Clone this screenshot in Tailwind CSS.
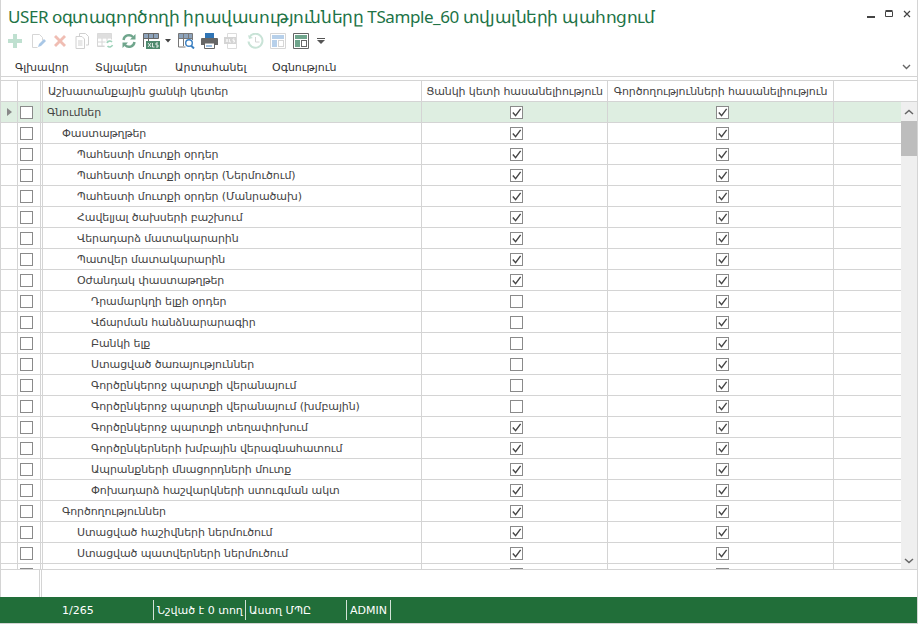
<!DOCTYPE html>
<html lang="hy">

<head>
  <meta charset="UTF-8" />
  <title>USER իրավասություններ</title>
  <script src="https://cdn.jsdelivr.net/npm/@tailwindcss/browser@4"></script>
</head>

<body class="bg-white overflow-hidden font-['DejaVu_Sans',sans-serif] text-[#444]">
  <div class="w-[918px] h-[624px] flex flex-col border-l border-r border-[#d4d4d4]">

    <!-- title -->
    <div class="h-[30px] shrink-0 flex items-center pl-[7px] pt-[2px] relative">
      <span class="text-[17px] leading-none tracking-[-0.42px] text-[#217346] font-['Noto_Sans',sans-serif] whitespace-nowrap">USER օգտագործողի իրավասությունները TSample_60 տվյալների պահոցում</span>
      <div class="absolute left-[865px] top-[9px] flex items-center gap-[9px]">
        <svg width="10" height="10" viewBox="0 0 10 10"><rect x="1" y="7" width="8" height="2" fill="#444" /></svg>
        <svg width="9" height="10" viewBox="0 0 9 10"><path d="M.5 2.500h7v5h-7z M.5 1.500h7" fill="none" stroke="#444" /></svg>
        <svg width="9" height="10" viewBox="0 0 9 10"><path d="M1 2l6 6M7 2l-6 6" stroke="#444" stroke-width="1.200" /></svg>
      </div>
    </div>

    <!-- toolbar -->
    <div class="h-[22px] shrink-0 flex items-center pl-[6px] relative">
      <div class="w-[23px] flex"><svg width="16" height="16" viewBox="0 0 16 16"><path d="M6 1h4v5h5v4h-5v5H6v-5H1V6h5z" fill="#bfe0d0" /></svg></div>
      <div class="w-[22px] flex"><svg width="16" height="16" viewBox="0 0 16 16"><path d="M2.500 1.500h7l3 3v3M2.500 1.500v13h5" fill="none" stroke="#d6d6d6" /><path d="M8 14l1-3 5-5 2 2-5 5z" fill="#a9c7e6" /></svg></div>
      <div class="w-[22px] flex"><svg width="16" height="16" viewBox="0 0 16 16"><path d="M2 4l2-2 4 4 4-4 2 2-4 4 4 4-2 2-4-4-4 4-2-2 4-4z" fill="#f0bdb3" /></svg></div>
      <div class="w-[23px] flex"><svg width="16" height="16" viewBox="0 0 16 16"><path d="M5.500 3V.5h6l3 3v8.500H12M2 3.500h6l2.500 2.500v9.500H2z" fill="#fff" stroke="#d0d0d0" /><path d="M4 8h4.500M4 10h4.500M4 12h4.500" stroke="#d0d0d0" /></svg></div>
      <div class="w-[24px] flex"><svg width="17" height="16" viewBox="0 0 17 16"><path d="M.5.500h14v6M.5.500v13h7M.5 5h14M.5 9h8M.5 13h7M5 .5v13M10 .5v8" fill="none" stroke="#d6d6d6" /><path d="M.5.500h14V5H.5z" fill="#dedede" /><path d="M10 10a3 3 0 0 1 5-1M15.500 12a3 3 0 0 1-5 1" fill="none" stroke="#9fd3bb" stroke-width="1.600" /></svg></div>
      <div class="w-[22px] flex"><svg width="16" height="16" viewBox="0 0 16 16"><path d="M2.500 7a5.500 5.500 0 0 1 9.500-3M13.500 9a5.500 5.500 0 0 1-9.500 3" fill="none" stroke="#6fa58c" stroke-width="2.400" /><path d="M14.500 1v5.500H9zM1.500 15V9.500H7z" fill="#6fa58c" /></svg></div>
      <div class="w-[22px] flex"><svg width="17" height="16" viewBox="0 0 17 16"><path d="M.5 .5h15v5H.5z" fill="#8da3bb" stroke="#666" /><path d="M5.500 .5v5M10.500 .5v5M.5 5v9M5.500 5v4" fill="none" stroke="#666" /><rect x="3" y="8" width="14" height="8" fill="#4e8a6e" /><path d="M5 10l3 4M8 10l-3 4M9.500 10v4h2M15 10h-2v2h2v2h-2" fill="none" stroke="#fff" stroke-width=".8" /></svg></div>
      <div class="w-[13px] flex"><svg width="6" height="4" viewBox="0 0 6 4"><path d="M0 0h6L3 3.500z" fill="#444" /></svg></div>
      <div class="w-[23px] flex"><svg width="17" height="16" viewBox="0 0 17 16"><path d="M.5.500h14v5H.5z" fill="#8da3bb" stroke="#777" /><path d="M.5 5v9h7M5.500 1v12M10.500 1v4M14.500 5v2" fill="none" stroke="#777" /><circle cx="11" cy="10" r="3.300" fill="#fff" stroke="#3a7fc1" stroke-width="1.400" /><path d="M13 12.500l3 3" stroke="#3a7fc1" stroke-width="2" /></svg></div>
      <div class="w-[23px] flex"><svg width="17" height="16" viewBox="0 0 17 16"><rect x="4" y="0" width="9" height="5" fill="#2f74b5" /><path d="M1 5h15a1 1 0 0 1 1 1v6h-3v-2H3v2H0V6a1 1 0 0 1 1-1z" fill="#666" /><path d="M3.500 10h10v5.500h-10z" fill="#fff" stroke="#666" /><path d="M5 13h6" stroke="#3a7fc1" /></svg></div>
      <div class="w-[23px] flex"><svg width="16" height="16" viewBox="0 0 16 16"><path d="M3.500.5h9v15h-9z" fill="#fff" stroke="#dcdcdc" /><rect x="0" y="4" width="12" height="7" fill="#d4d4d4" /><path d="M2 6l2 3M4 6l-2 3M5.500 6v3h1.500M10.500 6H9v1.500h1.500V9H9" fill="none" stroke="#fff" stroke-width=".8" /></svg></div>
      <div class="w-[23px] flex"><svg width="17" height="17" viewBox="0 0 17 17"><path d="M2.500 4a7 7 0 1 1-1 4.500" fill="none" stroke="#c9e3d7" stroke-width="2" /><path d="M1 2l1 4 4-1z" fill="#c9e3d7" /><path d="M8.500 4v5h4" fill="none" stroke="#d4d4d4" /></svg></div>
      <div class="w-[23px] flex"><svg width="16" height="16" viewBox="0 0 16 16"><path d="M.5 .5h15v15H.5z" fill="#fff" stroke="#d6d6d6" /><rect x="2" y="2" width="12" height="4" fill="#b7d0ea" /><rect x="2" y="7" width="5" height="7" fill="#b7d0ea" /><rect x="8.500" y="7.500" width="5" height="6" fill="#fff" stroke="#d6d6d6" /></svg></div>
      <div class="w-[24px] flex"><svg width="16" height="16" viewBox="0 0 16 16"><path d="M.5 .5h15v15H.5z" fill="#fff" stroke="#666" /><rect x="2" y="2" width="12" height="4" fill="#6fa58c" /><rect x="2" y="7" width="5" height="7" fill="#6fa58c" /><rect x="8.500" y="7.500" width="5" height="6" fill="#fff" stroke="#666" /></svg></div>
      <div class="flex"><svg width="8" height="6" viewBox="0 0 8 6"><path d="M0 0h8v1H0zM0 2h8L4 6z" fill="#555" /></svg></div>
    </div>

    <!-- menu -->
    <div class="h-[25px] shrink-0 flex items-center pt-[9px] pl-[14px] text-[11px] text-[#333] relative border-b border-[#d4d4d4]">
      <span class="w-[80px]">Գլխավոր</span>
      <span class="w-[80px]">Տվյալներ</span>
      <span class="w-[97px]">Արտահանել</span>
      <span>Օգնություն</span>
      <svg class="absolute left-[901px] top-[12px]" width="9" height="6" viewBox="0 0 9 6"><path d="M1 1l3.500 3.500L8 1" fill="none" stroke="#666" stroke-width="1.400" /></svg>
    </div>

    <!-- header -->
    <div class="mt-[3px] h-[22px] shrink-0 flex text-[11px] tracking-[-0.1px] text-[#444] border-t border-b border-[#d4d4d4]">
      <div class="w-[17px] border-r border-[#d4d4d4]"></div>
      <div class="w-[23px] border-r border-[#d4d4d4]"></div>
      <div class="w-[380px] pl-[5px] pt-[2px] border-r border-l border-[#d4d4d4] flex items-center ml-[1px]">Աշխատանքային ցանկի կետեր</div>
      <div class="w-[186px] pt-[2px] border-r border-[#d4d4d4] flex items-center justify-center whitespace-nowrap">Ցանկի կետի հասանելիություն</div>
      <div class="w-[226px] pt-[2px] border-r border-[#d4d4d4] flex items-center justify-center whitespace-nowrap">Գործողությունների հասանելիություն</div>
    </div>

    <!-- grid body -->
    <div class="h-[468px] shrink-0 relative overflow-hidden border-b border-[#d4d4d4]">
      <div id="rows"></div>
      <div class="absolute left-[900px] top-0 bottom-0 w-[16px] bg-[#efefef]">
        <svg class="absolute left-[3px] top-[7px]" width="10" height="6" viewBox="0 0 10 6"><path d="M1 5l4-3.500L9 5" fill="none" stroke="#666" stroke-width="1.500" /></svg>
        <div class="absolute top-[19px] h-[35px] w-full bg-[#bdbdbd]"></div>
        <svg class="absolute left-[3px] top-[456px]" width="10" height="6" viewBox="0 0 10 6"><path d="M1 1l4 3.500L9 1" fill="none" stroke="#666" stroke-width="1.500" /></svg>
      </div>
    </div>

    <!-- empty footer strip -->
    <div class="h-[27px] shrink-0 flex">
      <div class="w-[39px] border-r border-[#d4d4d4]"></div>
      <div class="w-[2px] border-r border-[#d4d4d4]"></div>
    </div>

    <!-- status bar -->
    <div class="h-[26px] shrink-0 bg-[#216e39] flex items-center text-white text-[11px] -ml-px">
      <span class="w-[153px] pl-[62px] pt-[2px]">1/265</span>
      <span class="w-[92px] h-[20px] pl-[3px] pt-[2px] border-l border-white/80 flex items-center whitespace-nowrap">Նշված է 0 տող</span>
      <span class="w-[101px] h-[20px] pl-[3px] pt-[2px] border-l border-white/80 flex items-center whitespace-nowrap">Աստղ ՄՊԸ</span>
      <span class="w-[45px] h-[20px] pl-[3px] pt-[2px] border-l border-r border-white/80 flex items-center">ADMIN</span>
    </div>
    <div class="h-px shrink-0 bg-[#d4d4d4] -ml-px"></div>
  </div>

  <script>
    const pad = { 0: 'pl-[4px]', 1: 'pl-[19px]', 2: 'pl-[34px]', 3: 'pl-[48px]' };
    const rows = [
      ['Գնումներ', 0, 1], ['Փաստաթղթեր', 1, 1],
      ['Պահեստի մուտքի օրդեր', 2, 1], ['Պահեստի մուտքի օրդեր (Ներմուծում)', 2, 1],
      ['Պահեստի մուտքի օրդեր (Մանրածախ)', 2, 1], ['Հավելյալ ծախսերի բաշխում', 2, 1],
      ['Վերադարձ մատակարարին', 2, 1], ['Պատվեր մատակարարին', 2, 1], ['Օժանդակ փաստաթղթեր', 2, 1],
      ['Դրամարկղի ելքի օրդեր', 3, 0], ['Վճարման հանձնարարագիր', 3, 0], ['Բանկի ելք', 3, 0],
      ['Ստացված ծառայություններ', 3, 0], ['Գործընկերոջ պարտքի վերանայում', 3, 0],
      ['Գործընկերոջ պարտքի վերանայում (խմբային)', 3, 0], ['Գործընկերոջ պարտքի տեղափոխում', 3, 1],
      ['Գործընկերների խմբային վերագնահատում', 3, 1], ['Ապրանքների մնացորդների մուտք', 3, 1],
      ['Փոխադարձ հաշվարկների ստուգման ակտ', 3, 1], ['Գործողություններ', 1, 1],
      ['Ստացված հաշիվների ներմուծում', 2, 1], ['Ստացված պատվերների ներմուծում', 2, 1], ['', 2, 1],
    ];
    const box = (on) => `<span class="block w-[13px] h-[13px] border border-[#8a8a8a] bg-white">${on ? '<svg width="11" height="11" viewBox="0 0 12 12"><path d="M2 6l3 3.500L10.500 2" fill="none" stroke="#444" stroke-width="1.500"/></svg>' : ''}</span>`;
    document.getElementById('rows').innerHTML = rows.map(([name, level, on], i) => `
      <div class="h-[21px] w-[900px] flex text-[11px] tracking-[-0.1px] border-b border-[#d4d4d4] ${i === 0 ? 'bg-[#deeee1]' : ''}">
        <div class="w-[17px] border-r border-[#d4d4d4] flex items-center justify-center">${i === 0 ? '<svg width="5" height="8" viewBox="0 0 5 8"><path d="M0 0l5 4-5 4z" fill="#888"/></svg>' : ''}</div>
        <div class="w-[23px] border-r border-[#d4d4d4] flex items-center pl-[2px]">${box(false)}</div>
        <div class="w-[380px] ml-[1px] pt-[2px] border-l border-r border-[#d4d4d4] flex items-center whitespace-nowrap ${pad[level]}">${name}</div>
        <div class="w-[186px] border-r border-[#d4d4d4] flex items-center pl-[88px]">${box(on)}</div>
        <div class="w-[226px] border-r border-[#d4d4d4] flex items-center pl-[108px]">${box(true)}</div>
      </div>`).join('');
  </script>
</body>

</html>
